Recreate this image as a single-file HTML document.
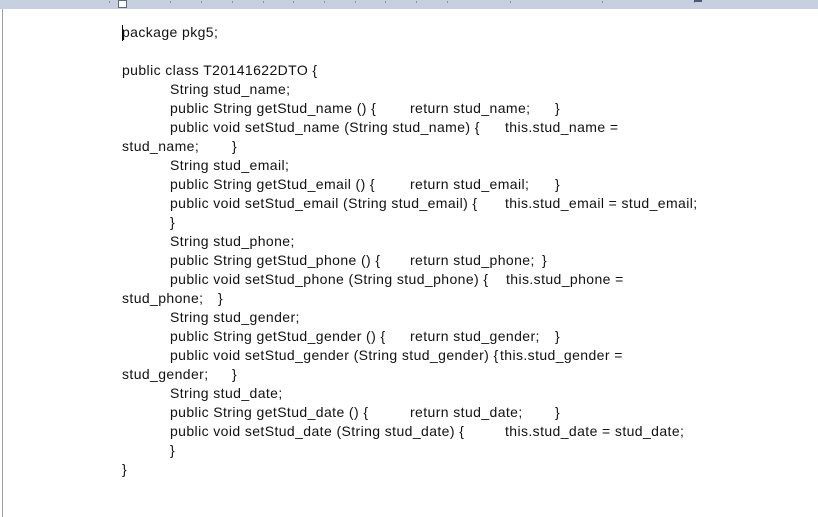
<!DOCTYPE html>
<html><head><meta charset="utf-8"><style>
html,body{margin:0;padding:0;width:818px;height:517px;overflow:hidden;background:#fff;}
.rul{position:absolute;left:0;top:0;width:818px;height:9px;background:#c6d0df;}
.tk{position:absolute;top:1px;width:1px;height:2px;background:#8a96a8;}
.lb{position:absolute;left:2px;top:9px;width:1px;height:508px;background:#a0a0a0;}
.s{position:absolute;font-family:"Liberation Sans","Noto Sans CJK KR",sans-serif;font-size:14px;letter-spacing:0.4px;line-height:19px;color:#111;white-space:pre;}
</style></head><body>
<div class="rul"></div>
<div class="tk" style="left:109px"></div><div class="tk" style="left:170px"></div><div class="tk" style="left:201px"></div><div class="tk" style="left:232px"></div><div class="tk" style="left:263px"></div><div class="tk" style="left:293px"></div><div class="tk" style="left:324px"></div><div class="tk" style="left:355px"></div><div class="tk" style="left:385px"></div><div class="tk" style="left:416px"></div><div class="tk" style="left:447px"></div><div class="tk" style="left:510px"></div><div class="tk" style="left:602px"></div><div class="tk" style="left:694px"></div>
<div style="position:absolute;left:118px;top:0;width:7px;height:6px;background:#fff;border:1px solid #5b6b85;"></div>
<div style="position:absolute;left:694px;top:0;width:8px;height:2px;background:#4b5a74;"></div>
<div class="lb"></div>
<div style="position:absolute;left:122px;top:25px;width:1px;height:16px;background:#000"></div>
<div class="s" style="left:122px;top:23px">package pkg5;</div>
<div class="s" style="left:122px;top:61px">public class T20141622DTO {</div>
<div class="s" style="left:170px;top:80px">String stud_name;</div>
<div class="s" style="left:170px;top:99px">public String getStud_name () {</div><div class="s" style="left:410px;top:99px">return stud_name;</div><div class="s" style="left:555px;top:99px">}</div>
<div class="s" style="left:170px;top:118px">public void setStud_name (String stud_name) {</div><div class="s" style="left:505px;top:118px">this.stud_name =</div>
<div class="s" style="left:122px;top:137px">stud_name;</div><div class="s" style="left:232px;top:137px">}</div>
<div class="s" style="left:170px;top:156px">String stud_email;</div>
<div class="s" style="left:170px;top:175px">public String getStud_email () {</div><div class="s" style="left:410px;top:175px">return stud_email;</div><div class="s" style="left:555px;top:175px">}</div>
<div class="s" style="left:170px;top:194px">public void setStud_email (String stud_email) {</div><div class="s" style="left:505px;top:194px">this.stud_email = stud_email;</div>
<div class="s" style="left:170px;top:213px">}</div>
<div class="s" style="left:170px;top:232px">String stud_phone;</div>
<div class="s" style="left:170px;top:251px">public String getStud_phone () {</div><div class="s" style="left:410px;top:251px">return stud_phone;</div><div class="s" style="left:542px;top:251px">}</div>
<div class="s" style="left:170px;top:270px">public void setStud_phone (String stud_phone) {</div><div class="s" style="left:506px;top:270px">this.stud_phone =</div>
<div class="s" style="left:122px;top:289px">stud_phone;</div><div class="s" style="left:218px;top:289px">}</div>
<div class="s" style="left:170px;top:308px">String stud_gender;</div>
<div class="s" style="left:170px;top:327px">public String getStud_gender () {</div><div class="s" style="left:410px;top:327px">return stud_gender;</div><div class="s" style="left:555px;top:327px">}</div>
<div class="s" style="left:170px;top:346px">public void setStud_gender (String stud_gender) {</div><div class="s" style="left:500px;top:346px">this.stud_gender =</div>
<div class="s" style="left:122px;top:365px">stud_gender;</div><div class="s" style="left:232px;top:365px">}</div>
<div class="s" style="left:170px;top:384px">String stud_date;</div>
<div class="s" style="left:170px;top:403px">public String getStud_date () {</div><div class="s" style="left:410px;top:403px">return stud_date;</div><div class="s" style="left:555px;top:403px">}</div>
<div class="s" style="left:170px;top:422px">public void setStud_date (String stud_date) {</div><div class="s" style="left:505px;top:422px">this.stud_date = stud_date;</div>
<div class="s" style="left:170px;top:441px">}</div>
<div class="s" style="left:122px;top:460px">}</div>
</body></html>
